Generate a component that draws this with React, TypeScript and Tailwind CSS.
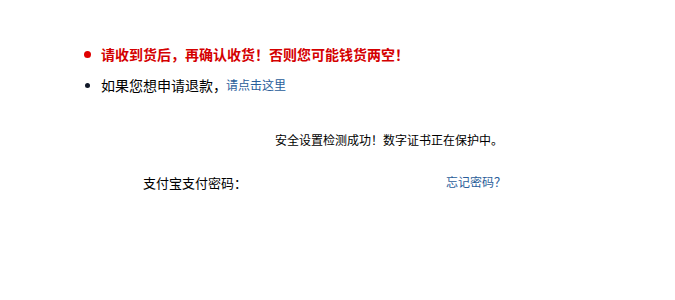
export default function App() {
  return (
    <div
      className="w-[675px] h-[300px] bg-white text-black"
      style={{ fontFamily: '"Noto Sans CJK SC", "Noto Sans", sans-serif' }}
    >
      <ul className="pt-[44px] pl-[84px] space-y-[11px]">
        <li className="flex items-center h-[20px]">
          <span className="w-[7px] h-[7px] rounded-full bg-[#e00000] mr-[10px]" />
          <span className="text-[14px] font-bold text-[#d40000] leading-[20px]">
            请收到货后，再确认收货！否则您可能钱货两空！
          </span>
        </li>
        <li className="flex items-center h-[20px]">
          <span className="w-[5px] h-[5px] rounded-full bg-[#101828] ml-[1px] mr-[11px]" />
          <span className="text-[14px] leading-[20px]">如果您想申请退款，</span>
          <a className="text-[12px] text-[#2a5d9a] leading-[20px] -ml-[1px]" href="#">
            请点击这里
          </a>
        </li>
      </ul>
      <div className="pl-[275px] mt-[35px] text-[12px] leading-[20px]">
        安全设置检测成功！数字证书正在保护中。
      </div>
      <div className="flex items-center mt-[23px] h-[20px]">
        <span className="ml-[143px] text-[13px] leading-[20px]">支付宝支付密码：</span>
        <a className="ml-[199px] text-[12px] text-[#2a5d9a] leading-[20px] -mt-[3px]" href="#">
          忘记密码？
        </a>
      </div>
    </div>
  )
}
